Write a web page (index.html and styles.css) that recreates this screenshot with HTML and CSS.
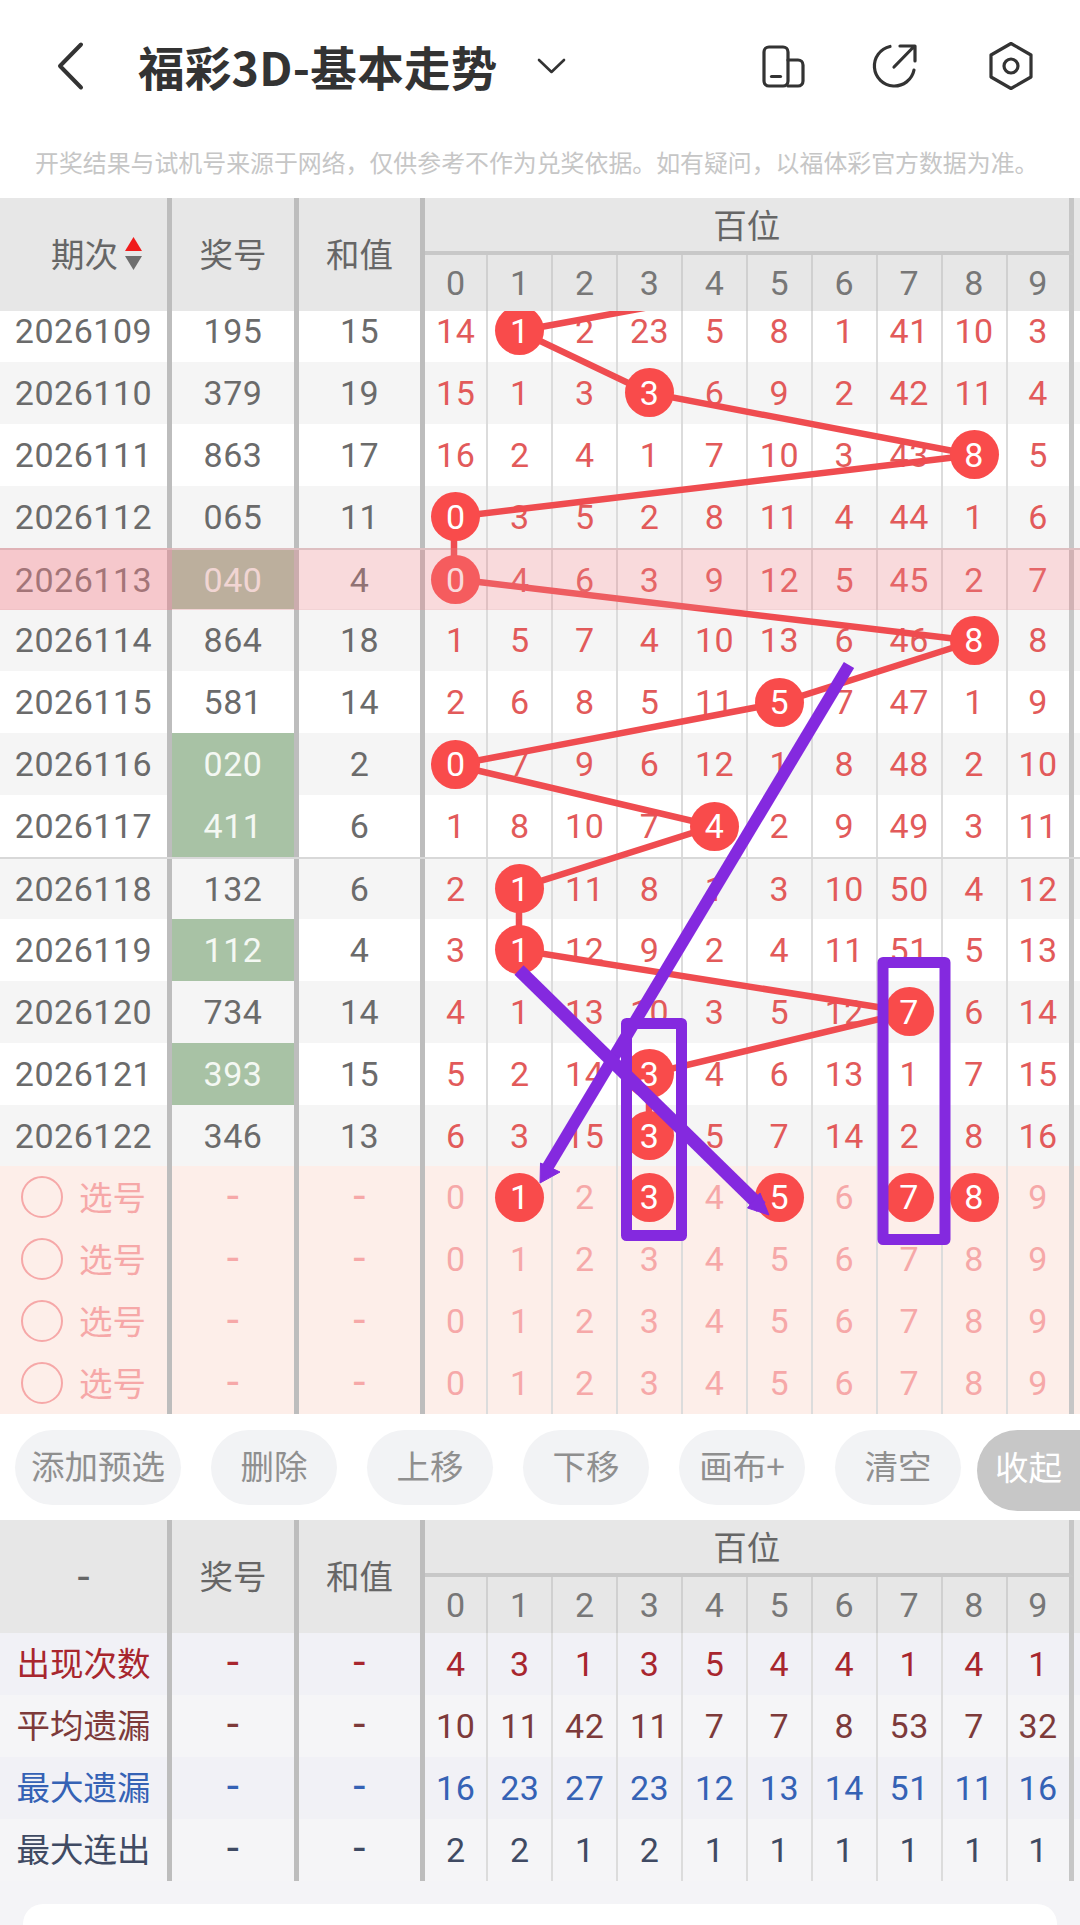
FILE: index.html
```html
<!DOCTYPE html>
<html lang="zh">
<head>
<meta charset="utf-8">
<title>福彩3D-基本走势</title>
<link rel="stylesheet" href="styles.css">
</head>
<body>
<header class="appbar">
  <svg class="ic ic-back" viewBox="55 40 30 50"><path d="M81 43.5 60 65l21 21.5"/></svg>
  <h1 class="title">福彩3D-基本走势</h1>
  <svg class="ic ic-drop" viewBox="536 55 32 20"><path d="M539 59l12.5 12L564 59"/></svg>
  <svg class="ic ic-device" viewBox="760 41 46 50"><rect x="764" y="47" width="24" height="39" rx="5"/><path d="M788 60h10a5 5 0 0 1 5 5v16a5 5 0 0 1-5 5H788"/><path d="M771.500 76.500h9"/></svg>
  <svg class="ic ic-share" viewBox="869 41 46 50"><path d="M888 46.500A20 20 0 1 0 912 70"/><path d="M892 67 912 46.500M898 46h15v15"/></svg>
  <svg class="ic ic-hex" viewBox="986 41 46 50"><path d="M1009 43.500 1029 55V77L1009 88.500 989 77V55Z"/><circle cx="1009" cy="66" r="7"/></svg>
</header>
<p class="notice">开奖结果与试机号来源于网络，仅供参考不作为兑奖依据。如有疑问，以福体彩官方数据为准。</p>

<section class="trend">
  <div class="thead">
    <div class="hcell sortcell"><span>期次</span>
      <svg class="sort" viewBox="0 0 17 33"><path class="up" d="M8.500 0 17 14H0Z"/><path class="down" d="M0 19H17L8.500 33Z"/></svg>
    </div>
    <div class="hcell">奖号</div>
    <div class="hcell">和值</div>
    <div class="hpos">
      <div class="hname">百位</div>
      <div class="digits hdigits"><span>0</span><span>1</span><span>2</span><span>3</span><span>4</span><span>5</span><span>6</span><span>7</span><span>8</span><span>9</span></div>
    </div>
  </div>

  <div class="tbody">
    <div class="scroll">
      <div class="row"><b class="c">2026109</b><b class="c">195</b><b class="c">15</b><i>14</i><i><u>1</u></i><i>2</i><i>23</i><i>5</i><i>8</i><i>1</i><i>41</i><i>10</i><i>3</i></div>
      <div class="row alt"><b class="c">2026110</b><b class="c">379</b><b class="c">19</b><i>15</i><i>1</i><i>3</i><i><u>3</u></i><i>6</i><i>9</i><i>2</i><i>42</i><i>11</i><i>4</i></div>
      <div class="row"><b class="c">2026111</b><b class="c">863</b><b class="c">17</b><i>16</i><i>2</i><i>4</i><i>1</i><i>7</i><i>10</i><i>3</i><i>43</i><i><u>8</u></i><i>5</i></div>
      <div class="row alt"><b class="c">2026112</b><b class="c">065</b><b class="c">11</b><i><u>0</u></i><i>3</i><i>5</i><i>2</i><i>8</i><i>11</i><i>4</i><i>44</i><i>1</i><i>6</i></div>
      <div class="row split"><b class="c">2026113</b><b class="c hit">040</b><b class="c">4</b><i><u>0</u></i><i>4</i><i>6</i><i>3</i><i>9</i><i>12</i><i>5</i><i>45</i><i>2</i><i>7</i></div>
      <div class="row alt"><b class="c">2026114</b><b class="c">864</b><b class="c">18</b><i>1</i><i>5</i><i>7</i><i>4</i><i>10</i><i>13</i><i>6</i><i>46</i><i><u>8</u></i><i>8</i></div>
      <div class="row"><b class="c">2026115</b><b class="c">581</b><b class="c">14</b><i>2</i><i>6</i><i>8</i><i>5</i><i>11</i><i><u>5</u></i><i>7</i><i>47</i><i>1</i><i>9</i></div>
      <div class="row alt"><b class="c">2026116</b><b class="c hit">020</b><b class="c">2</b><i><u>0</u></i><i>7</i><i>9</i><i>6</i><i>12</i><i>1</i><i>8</i><i>48</i><i>2</i><i>10</i></div>
      <div class="row"><b class="c">2026117</b><b class="c hit">411</b><b class="c">6</b><i>1</i><i>8</i><i>10</i><i>7</i><i><u>4</u></i><i>2</i><i>9</i><i>49</i><i>3</i><i>11</i></div>
      <div class="row alt split"><b class="c">2026118</b><b class="c">132</b><b class="c">6</b><i>2</i><i><u>1</u></i><i>11</i><i>8</i><i>1</i><i>3</i><i>10</i><i>50</i><i>4</i><i>12</i></div>
      <div class="row"><b class="c">2026119</b><b class="c hit">112</b><b class="c">4</b><i>3</i><i><u>1</u></i><i>12</i><i>9</i><i>2</i><i>4</i><i>11</i><i>51</i><i>5</i><i>13</i></div>
      <div class="row alt"><b class="c">2026120</b><b class="c">734</b><b class="c">14</b><i>4</i><i>1</i><i>13</i><i>10</i><i>3</i><i>5</i><i>12</i><i><u>7</u></i><i>6</i><i>14</i></div>
      <div class="row"><b class="c">2026121</b><b class="c hit">393</b><b class="c">15</b><i>5</i><i>2</i><i>14</i><i><u>3</u></i><i>4</i><i>6</i><i>13</i><i>1</i><i>7</i><i>15</i></div>
      <div class="row alt"><b class="c">2026122</b><b class="c">346</b><b class="c">13</b><i>6</i><i>3</i><i>15</i><i><u>3</u></i><i>5</i><i>7</i><i>14</i><i>2</i><i>8</i><i>16</i></div>
      <div class="row pre"><b class="c pick"><s></s><span>选号</span></b><b class="c dash">-</b><b class="c dash">-</b><i>0</i><i><u>1</u></i><i>2</i><i><u>3</u></i><i>4</i><i><u>5</u></i><i>6</i><i><u>7</u></i><i><u>8</u></i><i>9</i></div>
      <div class="row pre"><b class="c pick"><s></s><span>选号</span></b><b class="c dash">-</b><b class="c dash">-</b><i>0</i><i>1</i><i>2</i><i>3</i><i>4</i><i>5</i><i>6</i><i>7</i><i>8</i><i>9</i></div>
      <div class="row pre"><b class="c pick"><s></s><span>选号</span></b><b class="c dash">-</b><b class="c dash">-</b><i>0</i><i>1</i><i>2</i><i>3</i><i>4</i><i>5</i><i>6</i><i>7</i><i>8</i><i>9</i></div>
      <div class="row pre"><b class="c pick"><s></s><span>选号</span></b><b class="c dash">-</b><b class="c dash">-</b><i>0</i><i>1</i><i>2</i><i>3</i><i>4</i><i>5</i><i>6</i><i>7</i><i>8</i><i>9</i></div>
    </div>
    <svg class="canvas links" viewBox="0 311 1080 1104"><polyline points="655,306 519,331 649,393 974,455 454,517 454,579 974,641 779,703 454,765 714,826 519,888 519,950 909,1012 649,1074 649,1136"/></svg>
    <svg class="canvas marks" viewBox="0 311 1080 1104">
      <path class="thin" d="M849 665 546 1170"/>
      <path class="tip" d="M540 1183 540.500 1163 560 1172Z"/>
      <path class="thick" d="M519 970 761 1207"/>
      <path class="tip" d="M769 1215 760 1193 747.500 1208Z"/>
      <rect x="626.500" y="1023.500" width="55" height="212"/>
      <rect x="883" y="962.500" width="62" height="277"/>
    </svg>
    <div class="band"></div>
    <div class="band band-first"></div>
  </div>
</section>

<nav class="tools">
  <button class="tool wide">添加预选</button>
  <button class="tool">删除</button>
  <button class="tool">上移</button>
  <button class="tool">下移</button>
  <button class="tool">画布+</button>
  <button class="tool">清空</button>
  <button class="fold">收起</button>
</nav>

<section class="trend stats">
  <div class="thead">
    <div class="hcell dash">-</div>
    <div class="hcell">奖号</div>
    <div class="hcell">和值</div>
    <div class="hpos">
      <div class="hname">百位</div>
      <div class="digits hdigits"><span>0</span><span>1</span><span>2</span><span>3</span><span>4</span><span>5</span><span>6</span><span>7</span><span>8</span><span>9</span></div>
    </div>
  </div>
  <div class="row s1"><b class="c label">出现次数</b><b class="c dash">-</b><b class="c dash">-</b><i>4</i><i>3</i><i>1</i><i>3</i><i>5</i><i>4</i><i>4</i><i>1</i><i>4</i><i>1</i></div>
  <div class="row s2"><b class="c label">平均遗漏</b><b class="c dash">-</b><b class="c dash">-</b><i>10</i><i>11</i><i>42</i><i>11</i><i>7</i><i>7</i><i>8</i><i>53</i><i>7</i><i>32</i></div>
  <div class="row s3"><b class="c label">最大遗漏</b><b class="c dash">-</b><b class="c dash">-</b><i>16</i><i>23</i><i>27</i><i>23</i><i>12</i><i>13</i><i>14</i><i>51</i><i>11</i><i>16</i></div>
  <div class="row s4"><b class="c label">最大连出</b><b class="c dash">-</b><b class="c dash">-</b><i>2</i><i>2</i><i>1</i><i>2</i><i>1</i><i>1</i><i>1</i><i>1</i><i>1</i><i>1</i></div>
</section>
<div class="card"></div>
</body>
</html>
```
FILE: styles.css
```css
* { box-sizing: border-box; }
html, body { margin: 0; padding: 0; }
body {
  width: 1080px;
  height: 1925px;
  overflow: hidden;
  background: #f4f4f7;
  font-family: Roboto, "Noto Sans CJK SC", sans-serif;
  font-size: 34px;
  letter-spacing: .5px;
  color: #6b6b6b;
}

/* app bar */
.appbar {
  display: flex;
  align-items: center;
  height: 132px;
  padding: 0 46px 0 55px;
  background: #fff;
}
.ic { height: 50px; width: 46px; flex: none; fill: none; stroke: #333; stroke-width: 3.2; stroke-linecap: round; stroke-linejoin: round; }
.ic-back { width: 30px; stroke-width: 4; }
.ic-drop { width: 32px; height: 20px; stroke-width: 2.6; margin-left: 38px; }
.ic-device { margin-left: auto; }
.ic-share { margin-left: 65px; }
.ic-hex { margin-left: 71px; }
.title {
  margin: 0 0 0 53px;
  font-family: "Noto Sans CJK SC", sans-serif;
  font-size: 46.500px;
  font-weight: 700;
  line-height: 60px;
  letter-spacing: .3px;
  color: #333;
  white-space: nowrap;
}
.notice {
  margin: 0;
  height: 66px;
  padding: 12px 0 0 35px;
  background: #fff;
  font-family: "Noto Sans CJK SC", sans-serif;
  font-size: 23.900px;
  letter-spacing: 0;
  line-height: 36px;
  color: #c6c6c6;
  white-space: nowrap;
}

/* trend table */
.trend { background: #fff; }
.thead {
  display: grid;
  grid-template-columns: 172px 127px 126px 1fr;
  height: 113px;
  background: #e7e7e7;
}
.hcell {
  display: flex;
  align-items: center;
  justify-content: center;
  padding-bottom: 5px;
  border-right: 5px solid #bdbdbd;
  font-family: "Noto Sans CJK SC", sans-serif;
  font-size: 33.500px;
  letter-spacing: 0;
  color: #666;
}
.sortcell { justify-content: flex-start; gap: 7px; padding-left: 51px; padding-bottom: 3px; }
.sortcell span { margin-bottom: 2px; }
.sort { width: 17px; height: 33px; flex: none; }
.up { fill: #f01c1c; }
.down { fill: #6e6e6e; }
.hpos { display: flex; flex-direction: column; }
.hname {
  height: 57px;
  width: 648.600px;
  padding-bottom: 2px;
  border-right: 5px solid #c6c6c6;
  border-bottom: 4px solid #c8c8c8;
  display: flex;
  align-items: center;
  justify-content: center;
  font-family: "Noto Sans CJK SC", sans-serif;
  font-size: 33.500px;
  letter-spacing: 0;
  color: #666;
}
.digits, .row {
  --digit-cols: 63.400px repeat(8, 64.900px) 66px;
}
.digits {
  display: grid;
  grid-template-columns: var(--digit-cols);
  flex: 1;
  border-top: 0;
}
.hdigits span {
  display: flex;
  align-items: center;
  justify-content: center;
  border-right: 2.500px solid #d0d0d0;
  color: #777;
}
.hdigits span:last-child { border-right: 5px solid #c6c6c6; }

.tbody { position: relative; height: 1104px; overflow: hidden; }
.scroll { margin-top: -11px; }
.row {
  display: grid;
  grid-template-columns: 172px 127px 126px var(--digit-cols);
  height: 61.900px;
  background: #fff;
}
.row.alt { background: #f5f5f5; }
.row.split { border-top: 2px solid #d8d8d8; }
.c, .row i {
  display: flex;
  align-items: center;
  justify-content: center;
  min-width: 0;
  font-style: normal;
  font-weight: 400;
}
.c { border-right: 5px solid #bdbdbd; color: #6b6b6b; }
.row i { border-right: 2.500px solid #dcdcdc; color: #e25a5a; }
.row i:last-child { border-right: 5px solid #c6c6c6; }
.c.hit { background-clip: padding-box; background-color: #a8c2a5; color: #f4f8f3; }
.row u {
  position: relative;
  z-index: 2;
  display: flex;
  align-items: center;
  justify-content: center;
  flex: none;
  width: 49px;
  height: 49px;
  border-radius: 50%;
  background: #f94b4b;
  color: #fff;
  text-decoration: none;
}

/* preselect rows */
.row.pre { background: #fdeee9; }
.row.pre .c, .row.pre i { color: #f6a8a8; }
.row.pre u { color: #fff; }
.dash { font-size: 44px; line-height: 1; padding-bottom: 3px; }
.hcell.dash { font-family: Roboto, sans-serif; font-size: 44px; padding-bottom: 0; }
.c.pick {
  justify-content: flex-start;
  padding-left: 21px;
  gap: 16px;
  font-family: "Noto Sans CJK SC", sans-serif;
  font-size: 33.500px;
  letter-spacing: 0;
}
.pick s {
  width: 42px;
  height: 42px;
  border: 2.500px solid #f6a8a8;
  border-radius: 50%;
}
.pick span { margin-bottom: 3px; }

/* drawing layers */
.canvas { position: absolute; left: 0; top: 0; width: 1080px; height: 1104px; fill: none; }
.links { z-index: 1; stroke: #ef4c50; stroke-width: 6.500; }
.marks { z-index: 3; stroke: #8429df; stroke-linejoin: round; }
.marks rect { stroke-width: 11; }
.marks .thin { stroke-width: 12; }
.marks .thick { stroke-width: 13; }
.marks .tip { fill: #8429df; stroke-width: 1; }
.band {
  position: absolute;
  z-index: 4;
  left: 0;
  right: 0;
  top: 236.600px;
  height: 62px;
  background: rgba(235, 132, 138, .3);
}
.band-first { right: auto; width: 172px; background: rgba(235, 132, 138, .2); }

/* tools */
.tools {
  display: flex;
  align-items: flex-start;
  gap: 30px;
  height: 105px;
  padding: 15px 0 0 15px;
  background: #fff;
}
.tool, .fold {
  flex: none;
  border: 0;
  padding: 0 0 6px;
  font-family: "Noto Sans CJK SC", sans-serif;
  font-size: 33.500px;
}
.tool {
  width: 126px;
  height: 75px;
  border-radius: 38px;
  background: #f2f3f5;
  color: #8f8f8f;
}
.tool.wide { width: 166px; }
.fold {
  width: 103px;
  height: 81px;
  margin-left: -14px;
  padding-bottom: 10px;
  border-radius: 41px 0 0 41px;
  background: #c7c7c7;
  color: #fff;
}

/* summary */
.stats { background: transparent; }
.s1 { background: #f1f1f6; }
.s2 { background: #f5f5f7; }
.s3 { background: #f1f1f6; }
.s4 { background: #f5f5f7; }
.c.label { font-family: "Noto Sans CJK SC", sans-serif; font-size: 33.500px; letter-spacing: 0; padding-bottom: 4px; }
.s1 .c, .row.s1 i { color: #a8262e; }
.s2 .c, .row.s2 i { color: #7d3a3a; }
.s3 .c, .row.s3 i { color: #3562b5; }
.s4 .c, .row.s4 i { color: #3f4a63; }
.card {
  margin: 23px 23px 0;
  height: 80px;
  border-radius: 20px;
  background: #fff;
}
```
